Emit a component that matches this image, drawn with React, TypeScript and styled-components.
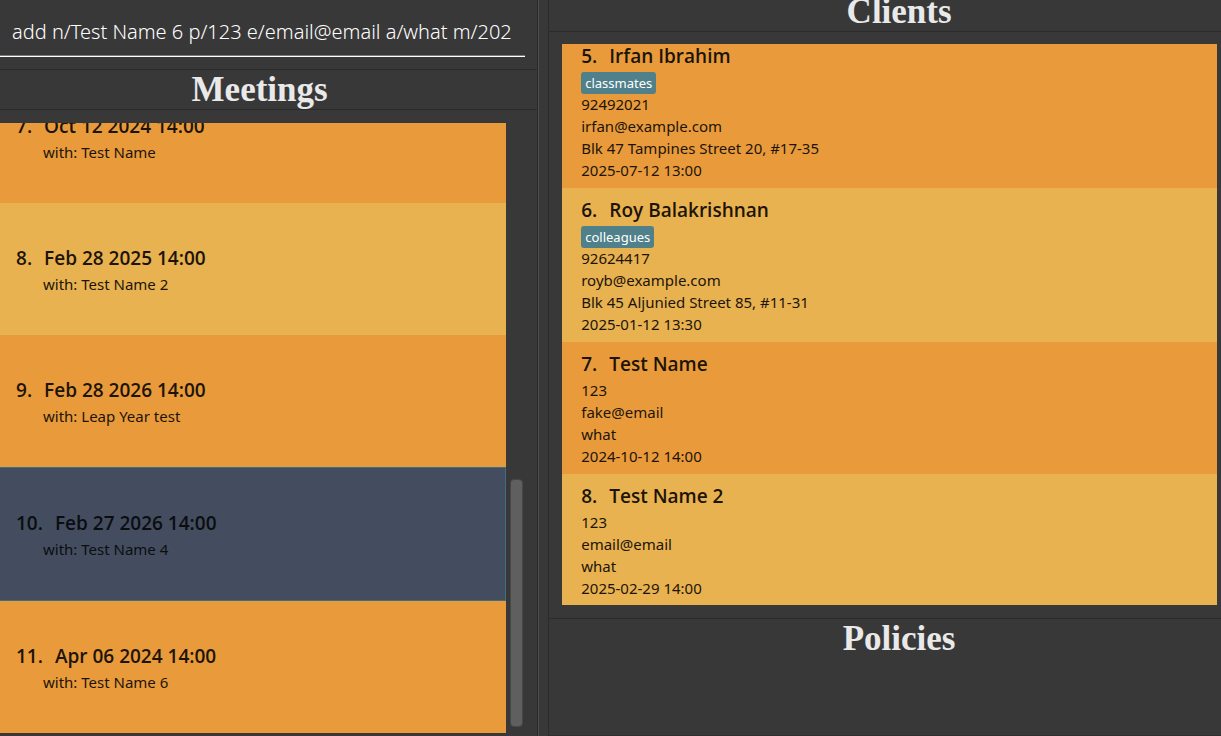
import React from "react";
import styled, { createGlobalStyle, css } from "styled-components";

const GlobalStyle = createGlobalStyle`
  *, *::before, *::after { box-sizing: border-box; }
  body {
    margin: 0;
    background: #383838;
    color: #1d1409;
    font-family: "Segoe UI", "Noto Sans", "Open Sans", sans-serif;
    overflow: hidden;
  }
  h1, h2, h3, p, ol { margin: 0; padding: 0; }
  ol { list-style: none; }
`;

const Window = styled.main`
  display: grid;
  grid-template-columns: 4fr 10px 5fr;
  height: 100vh;
`;

const Pane = styled.section`
  display: flex;
  flex-direction: column;
  min-width: 0;
  min-height: 0;
`;

const LeftPane = styled(Pane)`
  border-right: 1px solid #2b2b2b;
  padding-bottom: 3px;
`;

const RightPane = styled(Pane)`
  margin-top: -8px;
  border-left: 1px solid #2b2b2b;
  border-bottom: 1px solid #2f2f2f;
`;

const Splitter = styled.div`
  border-left: 1px solid #4d4d4d;
`;

const CommandBar = styled.form`
  flex: none;
  height: 69px;
  padding: 7px 12px 0 0;
`;

const CommandInput = styled.input`
  display: block;
  width: 100%;
  height: 50px;
  padding: 0 14px 0 12px;
  border: 0;
  border-bottom: 1px solid #ffffff;
  box-shadow: inset 0 -1px 0 #7a7a7a;
  outline: 0;
  background: transparent;
  color: #ffffff;
  font-family: "Segoe UI", "Noto Sans", "Open Sans", sans-serif;
  font-size: 20px;
  font-weight: 300;
`;

const PanelHeader = styled.header<{ $side: "left" | "right" }>`
  flex: none;
  height: 40px;
  border-bottom: 1px solid #2b2b2b;
  text-align: center;
  ${({ $side }) =>
    $side === "left"
      ? css`
          border-top: 1px solid #2b2b2b;
          height: 41px;
          padding-right: 18px;
        `
      : css`
          padding-left: 28px;
        `}
`;

const PanelTitle = styled.h2`
  color: #e9e9e9;
  font: 700 35px/40px "Liberation Serif", "Times New Roman", serif;
`;

const MeetingsBody = styled.div`
  flex: 1;
  display: flex;
  min-height: 0;
  padding: 13px 14px 0 0;
`;

const Viewport = styled.div`
  flex: 1;
  min-width: 0;
  overflow: hidden;
`;

const ScrollTrack = styled.div`
  flex: none;
  display: flex;
  align-items: flex-end;
  padding: 0 0 6px 4px;
`;

const ScrollThumb = styled.div`
  width: 13px;
  height: 41%;
  border: 1px solid #474747;
  border-radius: 4px;
  background: #5f5f5f;
`;

const MeetingList = styled.ol`
  margin-top: -52px;
`;

const rowColour = css`
  background: #e99b3b;
  &:nth-child(even) {
    background: #e8b250;
  }
`;

const MeetingRow = styled.li<{ $selected?: boolean }>`
  ${rowColour}
  height: 132px;
  padding: 41px 16px 0;
  ${({ $selected }) =>
    $selected &&
    css`
      && {
        height: 134px;
        border: 1px solid #3b7080;
        border-left: 0;
        background: #434d5f;
        color: #0b0d10;
      }
    `}
`;

const RowTitle = styled.h3`
  display: flex;
  gap: 12px;
  font-family: "Segoe UI", "Open Sans", "Noto Sans", sans-serif;
  font-size: 19px;
  line-height: 28px;
  font-weight: 600;
`;

const MeetingWith = styled.p`
  padding-left: 27px;
  font-size: 15px;
  line-height: 24px;
`;

const ClientsBody = styled.div`
  flex: 1;
  display: flex;
  min-height: 0;
  padding: 12px 4px 13px 13px;
  border-bottom: 1px solid #2b2b2b;
`;

const ClientList = styled.ol`
  margin-top: -10px;
`;

const ClientRow = styled.li`
  ${rowColour}
  padding: 8px 19px 7px;
`;

const ClientLine = styled.p`
  font-size: 15px;
  line-height: 22px;
`;

const Tag = styled.span`
  display: block;
  width: fit-content;
  margin-top: 2px;
  margin-bottom: -2px;
  padding: 0 4px;
  border-radius: 3px;
  background: #50808a;
  color: #ffffff;
  font-size: 13px;
  line-height: 22px;
`;

const Details = styled.div`
  padding-top: 1px;
`;

const PoliciesPanel = styled.section`
  flex: none;
  min-height: 116px;
  padding-left: 28px;
  text-align: center;
`;

const meetings = [
  { id: 7, date: "Oct 12 2024 14:00", person: "Test Name" },
  { id: 8, date: "Feb 28 2025 14:00", person: "Test Name 2" },
  { id: 9, date: "Feb 28 2026 14:00", person: "Leap Year test" },
  { id: 10, date: "Feb 27 2026 14:00", person: "Test Name 4", selected: true },
  { id: 11, date: "Apr 06 2024 14:00", person: "Test Name 6" },
];

const clients = [
  {
    id: 5,
    name: "Irfan Ibrahim",
    tag: "classmates",
    lines: ["92492021", "irfan@example.com", "Blk 47 Tampines Street 20, #17-35", "2025-07-12 13:00"],
  },
  {
    id: 6,
    name: "Roy Balakrishnan",
    tag: "colleagues",
    lines: ["92624417", "royb@example.com", "Blk 45 Aljunied Street 85, #11-31", "2025-01-12 13:30"],
  },
  { id: 7, name: "Test Name", lines: ["123", "fake@email", "what", "2024-10-12 14:00"] },
  { id: 8, name: "Test Name 2", lines: ["123", "email@email", "what", "2025-02-29 14:00"] },
];

export default function App() {
  return (
    <>
      <GlobalStyle />
      <Window>
        <LeftPane>
          <CommandBar onSubmit={(e) => e.preventDefault()}>
            <CommandInput
              aria-label="Command"
              defaultValue="add n/Test Name 6 p/123 e/email@email a/what m/2024-04-06 14:00"
            />
          </CommandBar>
          <PanelHeader $side="left">
            <PanelTitle>Meetings</PanelTitle>
          </PanelHeader>
          <MeetingsBody>
            <Viewport>
              <MeetingList>
                {meetings.map((m) => (
                  <MeetingRow key={m.id} $selected={m.selected}>
                    <RowTitle>
                      <span>{m.id}.</span>
                      <span>{m.date}</span>
                    </RowTitle>
                    <MeetingWith>with: {m.person}</MeetingWith>
                  </MeetingRow>
                ))}
              </MeetingList>
            </Viewport>
            <ScrollTrack>
              <ScrollThumb />
            </ScrollTrack>
          </MeetingsBody>
        </LeftPane>
        <Splitter />
        <RightPane>
          <PanelHeader $side="right">
            <PanelTitle>Clients</PanelTitle>
          </PanelHeader>
          <ClientsBody>
            <Viewport>
              <ClientList>
                {clients.map((c) => (
                  <ClientRow key={c.id}>
                    <RowTitle>
                      <span>{c.id}.</span>
                      <span>{c.name}</span>
                    </RowTitle>
                    {c.tag && <Tag>{c.tag}</Tag>}
                    <Details>
                      {c.lines.map((line) => (
                        <ClientLine key={line}>{line}</ClientLine>
                      ))}
                    </Details>
                  </ClientRow>
                ))}
              </ClientList>
            </Viewport>
          </ClientsBody>
          <PoliciesPanel>
            <PanelTitle>Policies</PanelTitle>
          </PoliciesPanel>
        </RightPane>
      </Window>
    </>
  );
}
